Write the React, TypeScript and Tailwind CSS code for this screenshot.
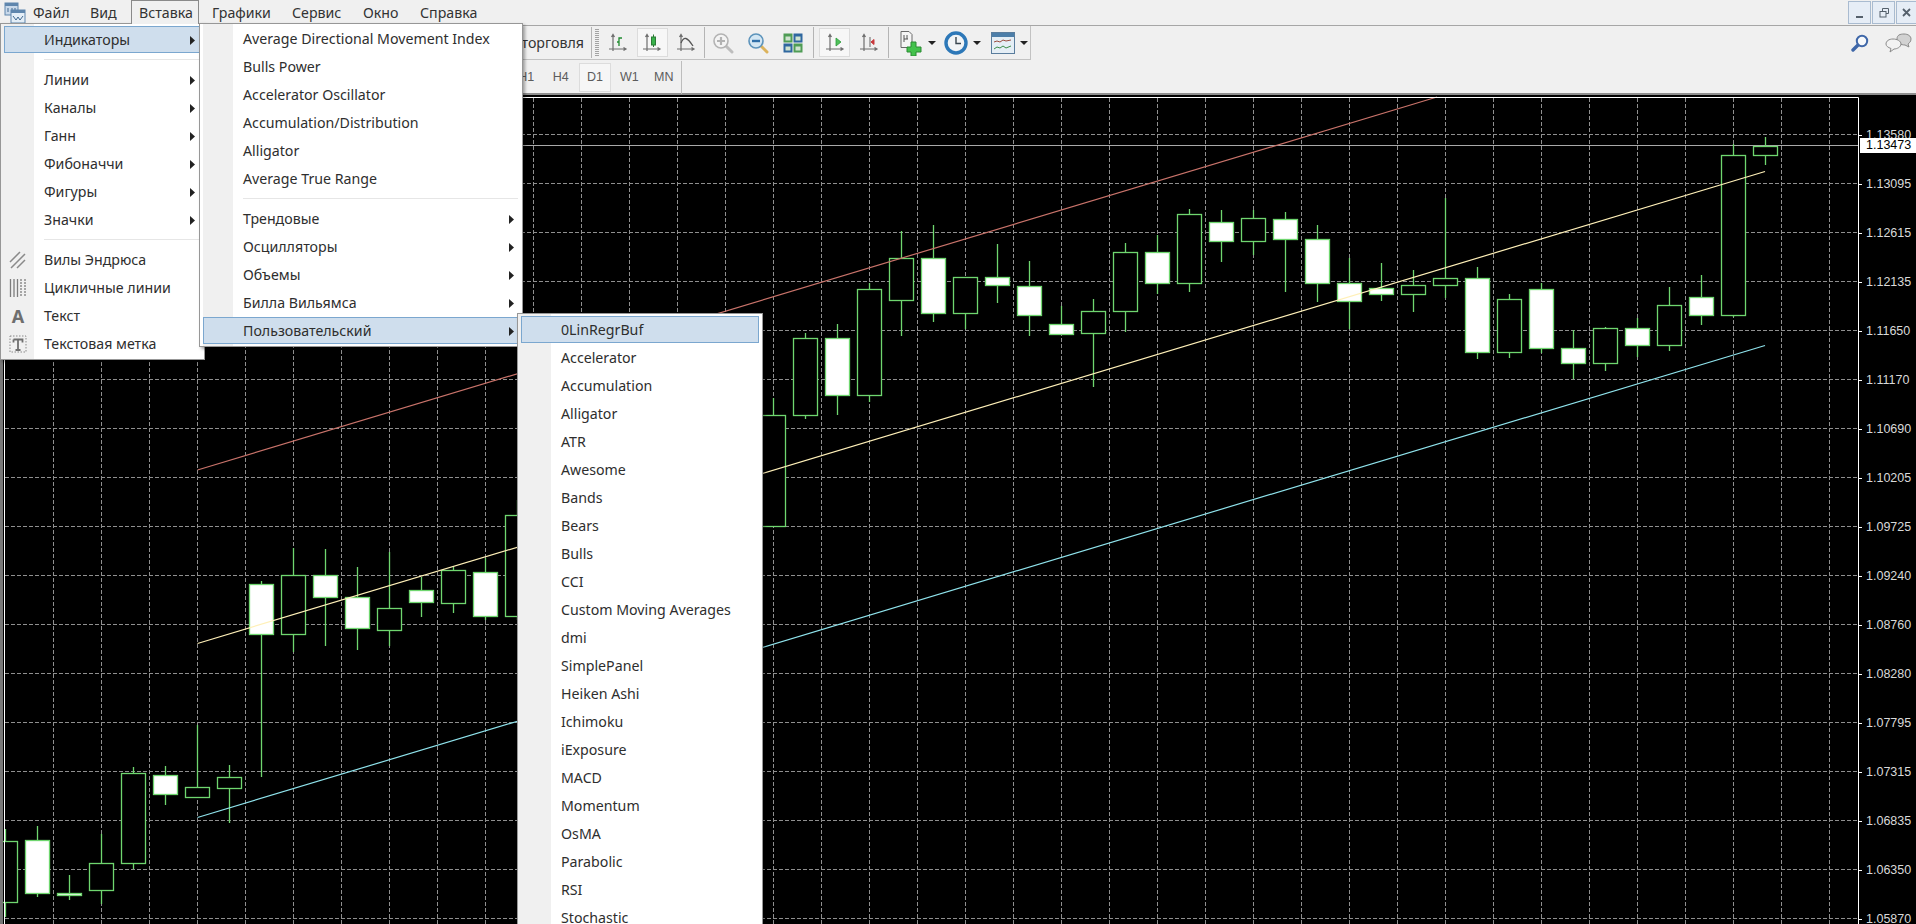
import React from 'react';

// [slot, body top, body bottom, high, low, filled]
const candles: [number, number, number, number, number, boolean][] = [
  [0, 841, 902, 829, 917, false],
  [1, 840, 893, 826, 897, true],
  [2, 893, 895, 875, 900, true],
  [3, 863, 890, 834, 904, false],
  [4, 773, 863, 767, 869, false],
  [5, 775, 794, 766, 805, true],
  [6, 787, 797, 725, 797, false],
  [7, 777, 788, 765, 823, false],
  [8, 584, 634, 581, 777, true],
  [9, 575, 634, 548, 652, false],
  [10, 575, 597, 549, 646, true],
  [11, 597, 628, 567, 650, true],
  [12, 608, 630, 552, 646, false],
  [13, 590, 602, 577, 617, true],
  [14, 570, 603, 566, 613, false],
  [15, 572, 616, 558, 620, true],
  [16, 515, 616, 500, 620, false],
  [24, 415, 526, 398, 526, false],
  [25, 338, 415, 333, 419, false],
  [26, 338, 395, 324, 415, true],
  [27, 289, 395, 283, 402, false],
  [28, 258, 300, 231, 336, false],
  [29, 258, 313, 225, 322, true],
  [30, 277, 313, 277, 329, false],
  [31, 277, 285, 244, 303, true],
  [32, 286, 315, 261, 336, true],
  [33, 324, 334, 306, 334, true],
  [34, 311, 333, 299, 387, false],
  [35, 252, 311, 243, 332, false],
  [36, 252, 283, 235, 294, true],
  [37, 214, 283, 209, 292, false],
  [38, 222, 241, 210, 262, true],
  [39, 218, 241, 210, 255, false],
  [40, 219, 239, 212, 292, true],
  [41, 239, 283, 225, 302, true],
  [42, 283, 301, 258, 329, true],
  [43, 288, 294, 263, 301, true],
  [44, 285, 294, 270, 312, false],
  [45, 278, 285, 198, 298, false],
  [46, 278, 352, 267, 359, true],
  [47, 299, 352, 294, 358, false],
  [48, 289, 348, 283, 353, true],
  [49, 348, 363, 330, 379, true],
  [50, 328, 363, 327, 371, false],
  [51, 328, 345, 318, 357, true],
  [52, 305, 345, 287, 351, false],
  [53, 297, 315, 275, 325, true],
  [54, 155, 315, 144, 317, false],
  [55, 146, 155, 137, 165, false],
];

const priceLabels = [
  '1.13580', '1.13095', '1.12615', '1.12135', '1.11650', '1.11170', '1.10690', '1.10205', '1.09725',
  '1.09240', '1.08760', '1.08280', '1.07795', '1.07315', '1.06835', '1.06350', '1.05870',
];

const customIndicators = [
  'Accelerator', 'Accumulation', 'Alligator', 'ATR', 'Awesome', 'Bands', 'Bears', 'Bulls', 'CCI',
  'Custom Moving Averages', 'dmi', 'SimplePanel', 'Heiken Ashi', 'Ichimoku', 'iExposure', 'MACD', 'Momentum',
  'OsMA', 'Parabolic', 'RSI', 'Stochastic',
];

const Chart = () => {
  const vLines = Array.from({ length: 38 }, (_, i) => 53.5 + 48 * i);
  const hLines = Array.from({ length: 17 }, (_, i) => 134.5 + 49 * i);
  return (
    <svg className="block flex-none" width={1856} height={829} viewBox="3 95 1856 829">
      {vLines.map((x) => (
        <line key={x} x1={x} x2={x} y1={98} y2={924} stroke="#8f8f8f" strokeDasharray="4 2" />
      ))}
      {hLines.map((y) => (
        <line key={y} x1={5} x2={1858} y1={y} y2={y} stroke="#8f8f8f" strokeDasharray="4 2" />
      ))}
      <line x1={5} x2={1858} y1={145.5} y2={145.5} stroke="#a9a9a9" />
      {candles.map(([slot, top, bottom, high, low, filled]) => {
        const cx = 5.5 + 32 * slot;
        return (
          <g key={slot} stroke="#6fd66f" strokeWidth={1.3}>
            <line x1={cx} x2={cx} y1={high} y2={top} />
            <line x1={cx} x2={cx} y1={bottom} y2={low} />
            <rect x={cx - 12} y={top + 0.5} width={24} height={bottom - top} fill={filled ? '#ffffff' : '#000000'} />
          </g>
        );
      })}
      <line x1={197.5} y1={470} x2={1437} y2={97} stroke="#c9736a" strokeWidth={1.2} />
      <line x1={197.5} y1={643.5} x2={1765} y2={171.5} stroke="#fff0b8" strokeWidth={1.2} />
      <line x1={197.5} y1={817.5} x2={1765} y2={345.5} stroke="#8fe3ec" strokeWidth={1.2} />
      <path d="M4.5 924V97.5H1858.5V924" fill="none" stroke="#ffffff" />
    </svg>
  );
};

const Axes = ({ children }: { children?: React.ReactNode }) => (
  <svg width="20" height="20" viewBox="0 0 20 20" fill="none">
    <path d="M5 1.5V18M1 16h17M3.5 4L5 1.5 6.5 4M15.5 14.5l2.500 1.500-2.500 1.500" stroke="#6e6e6e" strokeWidth="1.2" />
    {children}
  </svg>
);

const Magnifier = ({ lens, ring, handle, sign }: { lens: string; ring: string; handle: string; sign: string }) => (
  <svg width="22" height="22" viewBox="0 0 22 22" fill="none">
    <path d="M13.5 13.5L20 20" stroke={handle} strokeWidth="3" strokeLinecap="round" />
    <circle cx="9" cy="9" r="7" fill={lens} stroke={ring} strokeWidth="1.6" />
    {sign === '+' && <path d="M9 5v8M5 9h8" stroke={ring} strokeWidth="2.2" />}
    {sign === '-' && <path d="M5 9h8" stroke="#2f6fa8" strokeWidth="2.4" />}
  </svg>
);

const Tile = ({ x, y, fill }: { x: number; y: number; fill: string }) => (
  <g>
    <rect x={x} y={y} width="9" height="9" fill={fill} />
    <rect x={x + 2} y={y + 3} width="5" height="4" fill="#cfe3cf" />
  </g>
);

const Caret = () => (
  <svg width="8" height="4" viewBox="0 0 8 4" className="ml-[5px]">
    <path d="M0 0h8L4 4z" fill="#222" />
  </svg>
);

const MenuArrow = () => (
  <svg width="5" height="9" viewBox="0 0 5 9" className="flex-none">
    <path d="M0 0l5 4.500L0 9z" fill="#222" />
  </svg>
);

const ToolBtn = ({ active, className, children }: { active?: boolean; className: string; children: React.ReactNode }) => (
  <div className={`flex h-[29px] items-center justify-center ${active ? 'bg-[#f7f7f7] border border-[#dcdcdc]' : ''} ${className}`}>
    {children}
  </div>
);

const Sep = ({ className }: { className: string }) => <div className={`h-[31px] w-px bg-[#b4b4b4] ${className}`} />;

const WinBtn = ({ className, children }: { className: string; children: React.ReactNode }) => (
  <div className={`flex h-[23px] flex-none items-center justify-center border border-[#a9bbd0] bg-[#e6edf6] ${className}`}>
    {children}
  </div>
);

const Separator = () => (
  <div className="flex h-[12px]">
    <div className="mt-[5px] h-px flex-1 bg-[#e6e6e6]" />
  </div>
);

const Row = ({ text, arrowX, active, icon }: {
  text: string;
  arrowX?: string;
  active?: boolean;
  icon?: React.ReactNode;
}) => (
  <div className="relative flex h-[28px] items-center">
    {active && <div className="absolute inset-y-0 left-[3px] right-[3px] mb-px border border-[#7ba7cf] bg-[#cfdeed]" />}
    {icon && <div className="absolute left-[5px] flex w-[24px] justify-center">{icon}</div>}
    <span className="relative pl-[43px]">{text}</span>
    {arrowX && <div className={`absolute ${arrowX}`}><MenuArrow /></div>}
  </div>
);

const menuPanel = "absolute border border-[#979797] text-[14.2px] leading-[20px] text-[#2e2e2e] shadow-[2px_2px_3px_rgba(0,0,0,0.35)]";

export default function App() {
  return (
    <div className="relative flex h-[924px] w-[1916px] flex-col overflow-hidden bg-[#f0f0f0] font-['Noto_Sans',sans-serif] text-[#333]">
      {/* menu bar */}
      <div className="flex h-[26px] flex-none items-start border-b border-[#a6a6a6] text-[14.2px] leading-[20px]">
        <div className="flex h-[25px] w-[33px] items-center justify-center pr-[4px]">
          <svg width="22" height="22" viewBox="0 0 22 22">
            <rect x="1" y="1" width="13" height="12" fill="#c9d9ea" stroke="#5f86ad" />
            <rect x="1" y="1" width="13" height="3" fill="#5f86ad" />
            <path d="M4 6v4M8 6v4M11 6v4" stroke="#40688f" />
            <rect x="7" y="8" width="14" height="13" fill="#e4eef7" stroke="#5f86ad" />
            <rect x="7" y="8" width="14" height="3" fill="#5f86ad" />
            <path d="M9 14l3 4 2-3 2 3 3-4" fill="none" stroke="#40688f" />
          </svg>
        </div>
        <div className="w-[57px] pt-[3px]">Файл</div>
        <div className="w-[41px] pt-[3px]">Вид</div>
        <div className="relative z-40 h-[24px] w-[68px] border border-b-0 border-[#8a8a8a] bg-[#f0f0f0] pl-[7px] pt-[2px]">Вставка</div>
        <div className="ml-[13px] w-[80px] pt-[3px]">Графики</div>
        <div className="w-[71px] pt-[3px]">Сервис</div>
        <div className="w-[57px] pt-[3px]">Окно</div>
        <div className="pt-[3px]">Справка</div>
        <div className="ml-auto flex gap-px pt-px">
          <WinBtn className="w-[23px]">
            <div className="mt-[8px] h-[2px] w-[7px] bg-[#55606c]" />
          </WinBtn>
          <WinBtn className="w-[23px]">
            <svg width="10" height="10" viewBox="0 0 10 10" fill="none" stroke="#55606c">
              <path d="M3.5 3V.5h6v5H7" />
              <rect x="1" y="3.5" width="6" height="5.5" />
            </svg>
          </WinBtn>
          <WinBtn className="w-[20px] border-r-0">
            <svg width="9" height="9" viewBox="0 0 9 9" stroke="#55606c" strokeWidth="1.8">
              <path d="M1 1l7 7M8 1L1 8" />
            </svg>
          </WinBtn>
        </div>
      </div>

      {/* main toolbar */}
      <div className="flex h-[34px] flex-none">
        <div className="flex h-[34px] w-[1031px] items-center border-b border-r border-[#c2c2c2]">
          <div className="w-[591px] pr-[7px] text-right text-[14.2px]">Автоторговля</div>
          <Sep className="" />
          <div className="ml-[3px] h-[27px] w-[4px] bg-[repeating-linear-gradient(to_bottom,#a3a3a3_0,#a3a3a3_1px,transparent_1px,transparent_2px)]" />
          <ToolBtn className="ml-[2px] w-[34px]">
            <Axes><path d="M11 13V5h3M9 9h2" stroke="#1f8a2f" strokeWidth="1.3" /></Axes>
          </ToolBtn>
          <ToolBtn active className="mx-[1.5px] w-[31px]">
            <Axes>
              <path d="M11.5 1.5V14" stroke="#2b7a35" />
              <rect x="9.5" y="4" width="4" height="8" fill="#38b24a" stroke="#2b7a35" />
            </Axes>
          </ToolBtn>
          <ToolBtn className="w-[34px]">
            <Axes><path d="M5 10C8 3 11 4 17 13" stroke="#555" strokeWidth="1.3" /></Axes>
          </ToolBtn>
          <Sep className="ml-[1px]" />
          <ToolBtn className="w-[35px]"><Magnifier lens="#f4f4f4" ring="#b3b3b3" handle="#bdbdbd" sign="+" /></ToolBtn>
          <ToolBtn className="w-[35px]"><Magnifier lens="#d3e6f3" ring="#5c93bb" handle="#dcb35c" sign="-" /></ToolBtn>
          <ToolBtn className="w-[35px]">
            <svg width="20" height="20" viewBox="0 0 20 20">
              <Tile x={0.5} y={0.5} fill="#4f9c55" />
              <Tile x={10.5} y={0.5} fill="#2f679f" />
              <Tile x={0.5} y={10.5} fill="#2f679f" />
              <Tile x={10.5} y={10.5} fill="#4f9c55" />
            </svg>
          </ToolBtn>
          <Sep className="ml-[3px]" />
          <ToolBtn active className="ml-[5px] w-[31px]">
            <Axes><path d="M11 5v8l5-4z" fill="#4fc25a" stroke="#2c9a3a" strokeWidth=".8" /></Axes>
          </ToolBtn>
          <ToolBtn className="ml-[2px] w-[34px]">
            <Axes><path d="M11 4v10" stroke="#666" /><path d="M15 6.500l-3 2.500 3 2.500z" fill="#c8383c" stroke="#c8383c" /></Axes>
          </ToolBtn>
          <Sep className="ml-[2px]" />
          <div className="ml-[10px] flex w-[45px] items-center">
            <svg width="24" height="26" viewBox="0 0 24 26">
              <path d="M2 1.5h8l3 3v13H2z" fill="#f5f5f5" stroke="#6a6a6a" />
              <path d="M5 12V5M5 9h4M8 5v4" stroke="#555" fill="none" />
              <path d="M12 12h5v5h5v5h-5v4h-5v-4H8v-5h4z" fill="#43c24c" stroke="#2a8a33" />
            </svg>
            <Caret />
          </div>
          <div className="flex w-[47px] items-center">
            <svg width="24" height="24" viewBox="0 0 24 24">
              <circle cx="12" cy="12" r="10" fill="#f1f4f6" stroke="#2d78b8" strokeWidth="3.4" />
              <path d="M12 6v6.500h5" fill="none" stroke="#39464f" strokeWidth="1.4" />
            </svg>
            <Caret />
          </div>
          <div className="flex items-center">
            <svg width="24" height="22" viewBox="0 0 24 22">
              <rect x=".5" y=".5" width="23" height="21" fill="#e5eef5" stroke="#5a7d9d" />
              <rect x="1" y="1" width="22" height="4" fill="#4c7ea9" />
              <path d="M3 10l3-1 3 1 3-2 3 1 5-1" fill="none" stroke="#9b4d3f" />
              <path d="M3 17l3-2 3 1 3-2 3 2 5-2" fill="none" stroke="#3d8e49" />
            </svg>
            <Caret />
          </div>
        </div>
        <div className="ml-auto flex items-center gap-[15px] pr-[4px]">
          <svg width="18" height="18" viewBox="0 0 18 18">
            <path d="M7.5 10.5L2 16" stroke="#3f67a8" strokeWidth="3.4" strokeLinecap="round" />
            <circle cx="11" cy="7" r="5.2" fill="#f7f9fb" stroke="#3f67a8" strokeWidth="2" />
          </svg>
          <svg width="28" height="20" viewBox="0 0 28 20" stroke="#8b8b8b">
            <path d="M20 1c4 0 7 2 7 5s-2 4-3 5l1 3-4-2c-4 0-8-2-8-6s3-5 7-5z" fill="#d2d2d2" />
            <path d="M9 6c4 0 8 2 8 5s-4 5-7 5l-4 3 1-3.500c-3-1-5-2.500-5-4.500 0-3 3-5 7-5z" fill="#f2f2f2" />
          </svg>
        </div>
      </div>

      {/* timeframes */}
      <div className="flex h-[35px] flex-none items-center border-b-2 border-[#8e8e8e] pl-[509px] pt-px font-['Liberation_Sans',sans-serif] text-[12.5px] text-[#5c5c5c]">
        <div className="w-[34.5px] text-center">H1</div>
        <div className="w-[34.5px] text-center">H4</div>
        <div className="mx-[1px] flex h-[29px] w-[32px] items-center justify-center border border-[#dcdcdc] bg-[#f6f6f6]">D1</div>
        <div className="w-[34.5px] text-center">W1</div>
        <div className="w-[34.5px] text-center">MN</div>
        <div className="h-[33px] w-px bg-[#bdbdbd]" />
      </div>

      {/* chart */}
      <div className="relative flex min-h-0 flex-1 bg-black">
        <div className="w-[3px] flex-none bg-[#777]" />
        <Chart />
        <div className="flex w-[57px] flex-none flex-col pt-[16px] font-['Liberation_Sans',sans-serif] text-[12.5px] text-[#d9d9d9]">
          {priceLabels.map((p) => (
            <div key={p} className="flex h-[49px] flex-none items-center">
              <div className="h-px w-[3px] bg-white" />
              <span className="ml-[4px]">{p}</span>
            </div>
          ))}
        </div>
        <div className="absolute right-0 top-[43px] flex h-[15px] w-[56px] items-center bg-white pl-[6px] font-['Liberation_Sans',sans-serif] text-[12.5px] text-black">1.13473</div>
      </div>

      {/* Индикаторы menu */}
      <div className={`${menuPanel} left-0 top-[23px] z-10 h-[337px] w-[205px] bg-[linear-gradient(to_right,#f0f0f0_33px,#ffffff_33px)] pt-[2px]`}>
        <Row text="Индикаторы" arrowX="left-[189px]" active />
        <div className="pl-[43px]"><Separator /></div>
        {['Линии', 'Каналы', 'Ганн', 'Фибоначчи', 'Фигуры', 'Значки'].map((t) => (
          <Row key={t} text={t} arrowX="left-[189px]" />
        ))}
        <div className="pl-[43px]"><Separator /></div>
        <Row text="Вилы Эндрюса" icon={
          <svg width="18" height="20" viewBox="0 0 18 20" stroke="#8a8a8a" strokeWidth="1.5"><path d="M1 12L11 2M2 18L16 4M8 18l8-8" /></svg>
        } />
        <Row text="Цикличные линии" icon={
          <svg width="18" height="20" viewBox="0 0 18 20" stroke="#7d7d7d" strokeWidth="1.3"><path d="M1.500 1v18M5 1v18M8.500 1v18" /><path d="M12 1v18M16 1v18" strokeDasharray="2 1" /></svg>
        } />
        <Row text="Текст" icon={
          <span className="text-[18px] font-bold leading-none text-[#6e6e6e]">A</span>
        } />
        <Row text="Текстовая метка" icon={
          <svg width="18" height="18" viewBox="0 0 18 18" fill="none"><rect x="1" y="1" width="16" height="16" stroke="#8a8a8a" strokeDasharray="1.500 1.500" /><path d="M4.500 4.500h9v3M4.500 7.500v-3M9 4.500V15M6.500 15h5" stroke="#6f6f6f" strokeWidth="1.800" /></svg>
        } />
      </div>

      {/* Индикаторы > list */}
      <div className={`${menuPanel} left-[199px] top-[23px] z-20 h-[324px] w-[324px] bg-[linear-gradient(to_right,#ffffff_3px,#f0f0f0_3px,#f0f0f0_33px,#ffffff_33px)] pt-[1px]`}>
        {['Average Directional Movement Index', 'Bulls Power', 'Accelerator Oscillator', 'Accumulation/Distribution', 'Alligator', 'Average True Range'].map((t) => (
          <Row key={t} text={t} />
        ))}
        <div className="pl-[43px] pr-[4px]"><Separator /></div>
        {['Трендовые', 'Осцилляторы', 'Объемы', 'Билла Вильямса'].map((t) => (
          <Row key={t} text={t} arrowX="left-[309px]" />
        ))}
        <Row text="Пользовательский" arrowX="left-[309px]" active />
      </div>

      {/* Пользовательский > list */}
      <div className={`${menuPanel} left-[517px] top-[313px] z-30 h-[640px] w-[246px] bg-[linear-gradient(to_right,#f0f0f0_33px,#ffffff_33px)] pt-[2px]`}>
        <Row text="0LinRegrBuf" active />
        {customIndicators.map((t) => (
          <Row key={t} text={t} />
        ))}
      </div>
    </div>
  );
}
